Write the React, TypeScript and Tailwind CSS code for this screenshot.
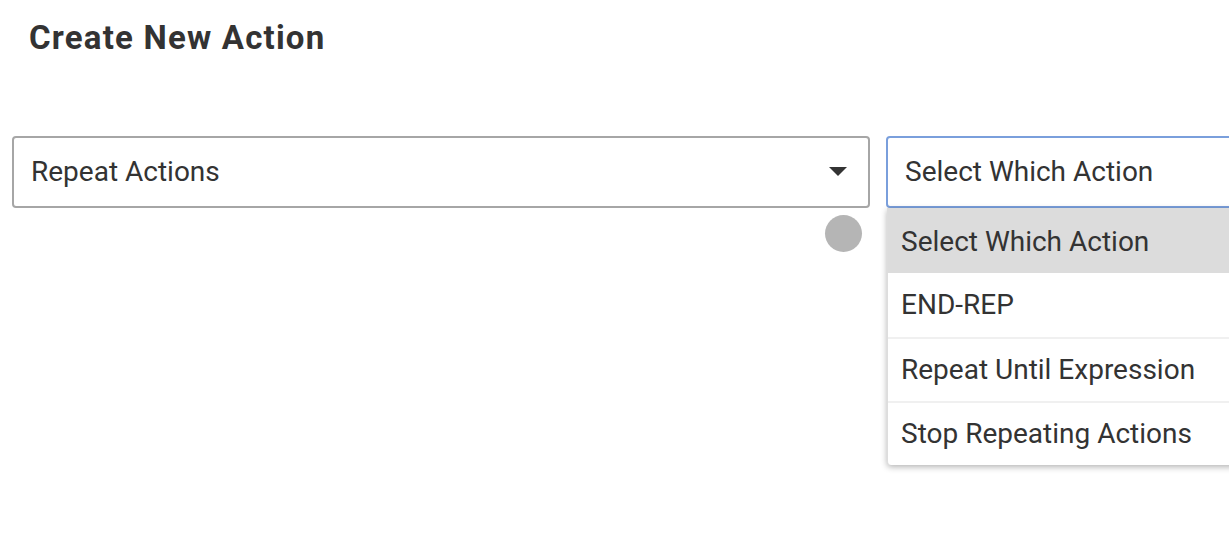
import React from "react";

export default function App() {
  const items = ["END-REP", "Repeat Until Expression", "Stop Repeating Actions"];
  return (
    <div className="w-[1229px] h-[535px] bg-white overflow-hidden text-[#333]" style={{ fontFamily: "Roboto, 'Liberation Sans', sans-serif" }}>
      <div className="pl-[29px] pt-[18px] h-[136px]">
        <h1 className="text-[33px] font-bold leading-[40px] tracking-[1.2px] text-[#333]">Create New Action</h1>
      </div>
      <div className="flex gap-[16px] pl-[12px]">
        <div className="relative w-[858px] shrink-0">
          <div className="h-[72px] border-2 border-[#a6a6a6] rounded-[4px] flex items-center justify-between pl-[17px] pr-[20px]">
            <span className="text-[28px] text-[#333]">Repeat Actions</span>
            <svg width="20" height="10" viewBox="0 0 20 10"><path d="M1 0 L19 0 L10 9 Z" fill="#333" /></svg>
          </div>
          <div className="absolute left-[813px] top-[79px] w-[37px] h-[37px] rounded-full bg-[#b5b5b5]" />
        </div>
        <div className="relative w-[400px] shrink-0">
          <div className="h-[72px] border-2 border-[#7a9fdc] rounded-[4px] flex items-center pl-[17px]">
            <span className="text-[28px] text-[#333]">Select Which Action</span>
          </div>
          <div className="absolute left-[1px] top-[72px] w-[400px] bg-white rounded-b-[4px] shadow-[0_2px_6px_rgba(0,0,0,0.3)] border-l border-[#ddd]">
            <div className="h-[65px] bg-[#dcdcdc] flex items-center pl-[13px] pt-[2px] text-[28px] text-[#333]">Select Which Action</div>
            {items.map((t, i) => (
              <div key={t} className={`h-[64px] flex items-center pl-[13px] text-[28px] text-[#333] ${i > 0 ? "border-t-2 border-[#f0f0f0]" : ""}`}>{t}</div>
            ))}
          </div>
        </div>
      </div>
    </div>
  );
}
